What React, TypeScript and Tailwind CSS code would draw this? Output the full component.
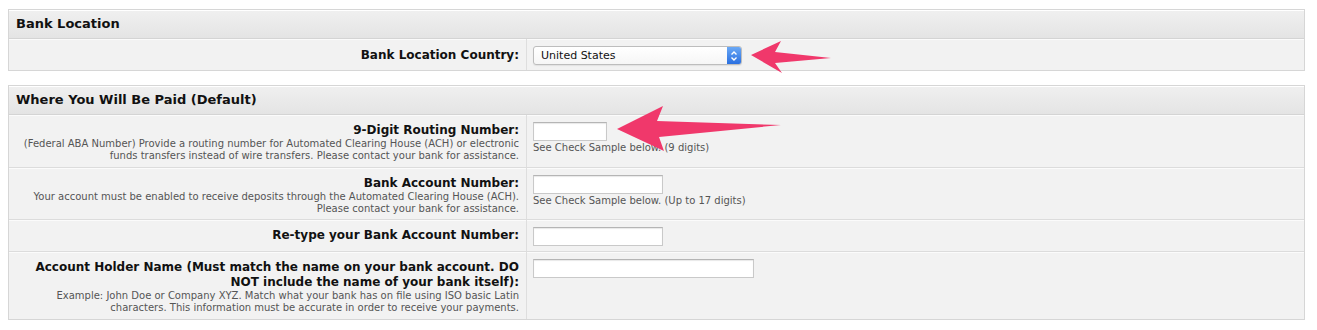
import React from "react";

const font = { fontFamily: '"DejaVu Sans", Verdana, sans-serif' };

function SectionHeader({ title }: { title: string }) {
  return (
    <div className="h-[29px] flex items-center px-[7px] border-b border-[#d4d4d4] bg-gradient-to-b from-[#f0f0f0] to-[#e4e4e4] shadow-[inset_0_1px_0_#ffffff]">
      <span className="text-[13px] font-bold text-[#111]">{title}</span>
    </div>
  );
}

function Row({
  label,
  desc,
  children,
  h,
  pt = "pt-[8px]",
  last,
}: {
  label: React.ReactNode;
  desc?: React.ReactNode;
  children?: React.ReactNode;
  h: string;
  pt?: string;
  last?: boolean;
}) {
  return (
    <div className={`flex ${h} ${last ? "" : "border-b border-[#dcdcdc]"} bg-[#f2f2f2] shadow-[inset_0_1px_0_#fbfbfb]`}>
      <div className={`w-[518px] shrink-0 border-r border-[#dedede] pr-[7px] pl-2 ${pt} text-right`}>
        <div className="text-[12px] font-bold leading-[15px] text-[#111]">{label}</div>
        {desc && <div className="text-[10px] leading-[12px] text-[#555]">{desc}</div>}
      </div>
      <div className="flex-1 pl-[6px] pt-[7px]">{children}</div>
    </div>
  );
}

function Input({ w }: { w: string }) {
  return (
    <div className={`${w} h-[19px] bg-white border border-[#c9c9c9] border-t-[#b5b5b5] shadow-[inset_0_1px_1px_#e8e8e8]`} />
  );
}

function Hint({ children }: { children: React.ReactNode }) {
  return <div className="text-[10px] leading-[12px] text-[#555] mt-[1px]">{children}</div>;
}

export default function App() {
  return (
    <div className="relative w-[1317px] h-[330px] bg-white pt-[9px] pl-[8px]" style={font}>
      <div className="w-[1297px] border border-[#d6d6d6]">
        <SectionHeader title="Bank Location" />
        <Row label="Bank Location Country:" h="h-[31px]" pt="pt-[9px]" last>
          <div className="flex w-[209px] h-[19px] bg-gradient-to-b from-white to-[#f6f6f6] border border-[#bdbdbd] rounded-[3px] shadow-[0_1px_1px_#e2e2e2]">
            <span className="flex-1 pl-[7px] text-[11px] leading-[18px] text-[#111]">United States</span>
            <span className="w-[14px] h-full rounded-r-[2px] bg-gradient-to-b from-[#6aa8f5] to-[#2a6fe0] flex items-center justify-center">
              <svg width="8" height="12" viewBox="0 0 8 12" fill="none" stroke="white" strokeWidth="1.4">
                <path d="M1.5 4.5 L4 2 L6.5 4.5" />
                <path d="M1.5 7.5 L4 10 L6.5 7.5" />
              </svg>
            </span>
          </div>
        </Row>
      </div>

      <div className="w-[1297px] border border-[#d6d6d6] mt-[14px]">
        <SectionHeader title="Where You Will Be Paid (Default)" />
        <Row
          label="9-Digit Routing Number:"
          h="h-[53px]"
          desc={
            <>
              (Federal ABA Number) Provide a routing number for Automated Clearing House (ACH) or electronic
              <br />
              funds transfers instead of wire transfers. Please contact your bank for assistance.
            </>
          }
        >
          <Input w="w-[74px]" />
          <Hint>See Check Sample below. (9 digits)</Hint>
        </Row>
        <Row
          label="Bank Account Number:"
          h="h-[52px]"
          desc={
            <>
              Your account must be enabled to receive deposits through the Automated Clearing House (ACH).
              <br />
              Please contact your bank for assistance.
            </>
          }
        >
          <Input w="w-[130px]" />
          <Hint>See Check Sample below. (Up to 17 digits)</Hint>
        </Row>
        <Row label="Re-type your Bank Account Number:" h="h-[32px]">
          <Input w="w-[130px]" />
        </Row>
        <Row
          label={
            <>
              Account Holder Name (Must match the name on your bank account. DO
              <br />
              NOT include the name of your bank itself):
            </>
          }
          h="h-[67px]"
          last
          desc={
            <>
              Example: John Doe or Company XYZ. Match what your bank has on file using ISO basic Latin
              <br />
              characters. This information must be accurate in order to receive your payments.
            </>
          }
        >
          <Input w="w-[221px]" />
        </Row>
      </div>

      <svg className="absolute left-0 top-0 pointer-events-none" width="1317" height="330">
        <path d="M751 55 L781 41 L775 52 L831 58 L775 63 L782 73 Z" fill="#f0386b" />
        <path d="M617 129 L663 106 L657 121 L781 125 L659 137 L664 151 Z" fill="#f0386b" />
      </svg>
    </div>
  );
}
